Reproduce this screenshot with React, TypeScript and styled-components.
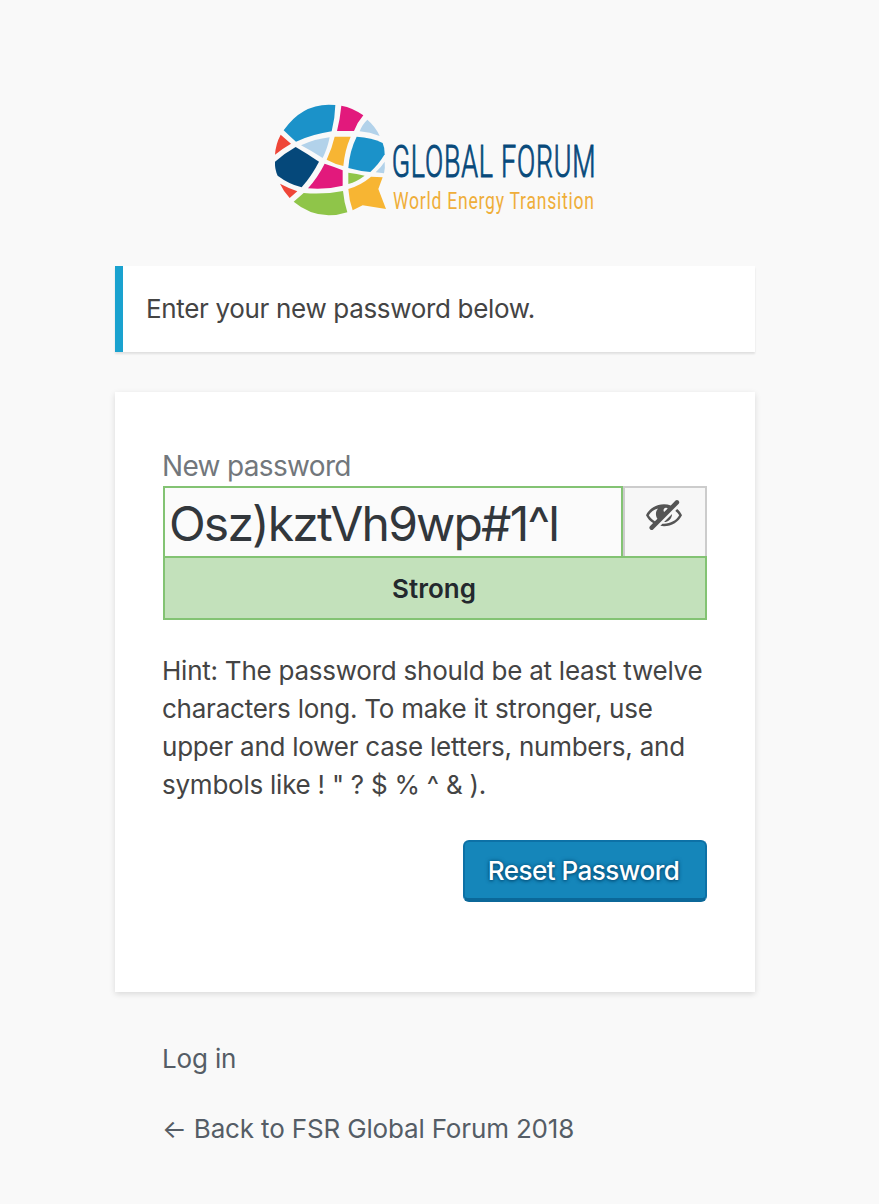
import styled, { createGlobalStyle } from 'styled-components';

const GlobalStyle = createGlobalStyle`
  * {
    box-sizing: border-box;
  }

  body {
    margin: 0;
    background: #f9f9f9;
    color: #444;
    font-family: Inter, 'Liberation Sans', sans-serif;
    font-size: 26px;
  }
`;

const Page = styled.main`
  display: flex;
  flex-direction: column;
  width: 640px;
  min-height: 1204px;
  margin-left: 115px;
  padding-top: 95px;
`;

const Logo = styled.svg`
  align-self: center;
  width: 340px;
  height: 130px;
  margin-bottom: 41px;
  overflow: visible;
`;

const Message = styled.p`
  height: 86px;
  margin: 0 0 40px;
  padding-left: 23px;
  border-left: 8px solid #1aa2cf;
  background: #fff;
  box-shadow: 0 2px 2px rgba(0, 0, 0, 0.1);
  line-height: 86px;
  letter-spacing: -0.33px;
`;

const Card = styled.form`
  display: flex;
  flex-direction: column;
  height: 600px;
  padding: 55px 48px 0;
  background: #fff;
  box-shadow: 0 2px 6px rgba(0, 0, 0, 0.13);
`;

const Label = styled.label`
  height: 39px;
  margin-left: -1px;
  color: #72777c;
  font-size: 28px;
  line-height: 39px;
  letter-spacing: -0.67px;
`;

const PasswordRow = styled.div`
  display: flex;
  height: 70px;
`;

const PasswordInput = styled.input`
  width: 460px;
  height: 70px;
  padding: 3px 4px 0;
  border: 2px solid #83c373;
  border-bottom: 0;
  border-radius: 0;
  outline: 0;
  background: #fbfbfb;
  color: #32373c;
  font-family: inherit;
  font-size: 48px;
  letter-spacing: -1.83px;
`;

const ToggleButton = styled.button`
  display: flex;
  flex: 1;
  justify-content: center;
  padding: 6px 2px 0 0;
  border: 2px solid #ccc;
  border-bottom: 0;
  background: #f7f7f7;
  color: #555;
`;

const Strength = styled.div`
  height: 64px;
  padding-right: 2px;
  border: 2px solid #83c373;
  background: #c3e1bb;
  color: #23282d;
  font-weight: 600;
  line-height: 62px;
  text-align: center;
`;

const Hint = styled.p`
  margin: 32px -10px 0 -1px;
  line-height: 38px;
  letter-spacing: -0.24px;
`;

const SubmitButton = styled.button`
  align-self: flex-end;
  width: 244px;
  height: 62px;
  margin-top: 36px;
  padding: 1px 3px 0 0;
  border: 2px solid #0d71a6;
  border-bottom: 4px solid #0b6899;
  border-radius: 6px;
  background: #1586ba;
  color: #fff;
  font-family: inherit;
  font-size: 26px;
  font-weight: 500;
  letter-spacing: -0.5px;
  text-shadow: 0 0 4px #05507a, 0 1px 3px #05507a;
`;

const Nav = styled.nav`
  display: flex;
  flex-direction: column;
  gap: 32px;
  padding: 48px 47px 0;
`;

const NavLink = styled.a`
  height: 38px;
  color: #555d66;
  line-height: 38px;
  letter-spacing: -0.16px;
  white-space: nowrap;
`;

const ForumLogo = () => (
  <Logo viewBox="0 0 1020 390" role="img" aria-label="Global Forum">
    <path fill="#1b92c9" d="M56 106Q108 30 191 29L211 30Q210 70 200 109Q145 117 93 140Q74 124 56 106Z" />
    <path fill="#e2197c" d="M229 32Q263 38 295 61Q277 82 267 108L216 108Q225 73 229 32Z" />
    <path fill="#b2d2ea" d="M307 74Q332 95 344 123Q315 111 284 109Q291 89 307 74Z" />
    <path fill="#ef4638" d="M47 119L78 146Q52 161 30 179Q32 147 47 119Z" />
    <path fill="#b2d2ea" d="M108 151Q149 132 194 127Q187 162 173 189Q142 169 108 151Z" />
    <path fill="#f7b533" d="M209 125L257 125Q239 166 235 213Q209 207 185 194Q201 160 209 125Z" />
    <path fill="#1b92c9" d="M275 125Q320 127 353 144Q360 160 359 178Q342 207 316 231Q282 228 250 219Q254 167 275 125Z" />
    <path fill="#05487a" d="M92 156Q128 177 162 200Q141 241 110 277Q71 267 38 242Q29 223 30 200Q60 174 92 156Z" />
    <path fill="#e2197c" d="M179 206Q207 215 233 226L233 272Q181 285 129 280Q159 246 179 206Z" />
    <path fill="#b2d2ea" d="M359 200Q361 217 357 235L332 232Q347 218 359 200Z" />
    <path fill="#8fc549" d="M250 233Q276 236 299 242Q275 260 250 267Z" />
    <path fill="#ef4638" d="M45 266Q70 279 97 289L74 309Q56 290 45 266Z" />
    <path fill="#8fc549" d="M116 294Q178 299 234 288Q237 321 247 352Q220 361 191 361Q132 359 86 320Z" />
    <path fill="#f7b533" d="M250 282Q289 270 318 245L353 247L340 282L363 342L293 331L263 346Q252 316 250 282Z" />
    <text
      x="380"
      y="247"
      fill="#084a7b"
      fontFamily="Roboto, sans-serif"
      fontSize="134"
      fontWeight="300"
      letterSpacing="4"
      stroke="#084a7b"
      strokeWidth="3"
      textLength="614"
      lengthAdjust="spacingAndGlyphs"
    >
      GLOBAL FORUM
    </text>
    <text
      x="384"
      y="341"
      fill="#efae3a"
      fontFamily="Roboto, sans-serif"
      fontSize="71"
      letterSpacing="3"
      textLength="605"
      lengthAdjust="spacingAndGlyphs"
    >
      World Energy Transition
    </text>
  </Logo>
);

const HiddenIcon = () => (
  <svg width="40" height="40" viewBox="0 0 20 20" fill="currentColor" aria-hidden="true">
    <path d="M17.2 3.3l.16.17c.39.39.39 1.02 0 1.41L4.55 17.7c-.39.39-1.03.39-1.41 0l-.17-.17c-.39-.39-.39-1.02 0-1.41l1.59-1.6c-1.57-1-2.76-2.3-3.56-3.93.81-1.65 2.03-2.98 3.64-3.99S8.04 5.09 10 5.09c1.2 0 2.33.21 3.4.6l2.38-2.39c.39-.39 1.03-.39 1.42 0zm-7.09 4.01c-.23.25-.34.54-.34.88 0 .31.12.58.31.81l1.8-1.79c-.13-.12-.28-.21-.45-.26-.11-.01-.28-.03-.49-.04-.33.03-.6.16-.83.4zM2.4 10.59c.69 1.23 1.71 2.25 3.05 3.05l1.28-1.28c-.51-.69-.77-1.47-.77-2.36 0-1.06.36-1.98 1.09-2.76-1.04.27-1.96.7-2.76 1.26-.8.58-1.43 1.27-1.89 2.09zm13.22-2.13l.96-.96c1.02.86 1.83 1.89 2.42 3.09-.81 1.65-2.03 2.98-3.64 3.99s-3.4 1.51-5.36 1.51c-.63 0-1.24-.07-1.83-.18l1.07-1.07c.25.02.5.05.76.05 1.63 0 3.13-.4 4.5-1.21s2.4-1.84 3.1-3.1c-.46-.82-1.09-1.51-1.89-2.09-.03-.01-.06-.02-.09-.03zm-5.58 5.58l4-4c-.01 1.1-.41 2.04-1.18 2.81-.78.78-1.72 1.18-2.82 1.19z" />
  </svg>
);

export default function App() {
  return (
    <>
      <GlobalStyle />
      <Page>
        <ForumLogo />
        <Message>Enter your new password below.</Message>
        <Card>
          <Label htmlFor="password">New password</Label>
          <PasswordRow>
            <PasswordInput id="password" type="text" defaultValue="Osz)kztVh9wp#1^l" spellCheck={false} />
            <ToggleButton type="button" aria-label="Hide password">
              <HiddenIcon />
            </ToggleButton>
          </PasswordRow>
          <Strength>Strong</Strength>
          <Hint>
            Hint: The password should be at least twelve
            <br />
            characters long. To make it stronger, use
            <br />
            upper and lower case letters, numbers, and
            <br />
            symbols like ! " ? $ % ^ &amp; ).
          </Hint>
          <SubmitButton type="button">Reset Password</SubmitButton>
        </Card>
        <Nav>
          <NavLink>Log in</NavLink>
          <NavLink>← Back to FSR Global Forum 2018</NavLink>
        </Nav>
      </Page>
    </>
  );
}
